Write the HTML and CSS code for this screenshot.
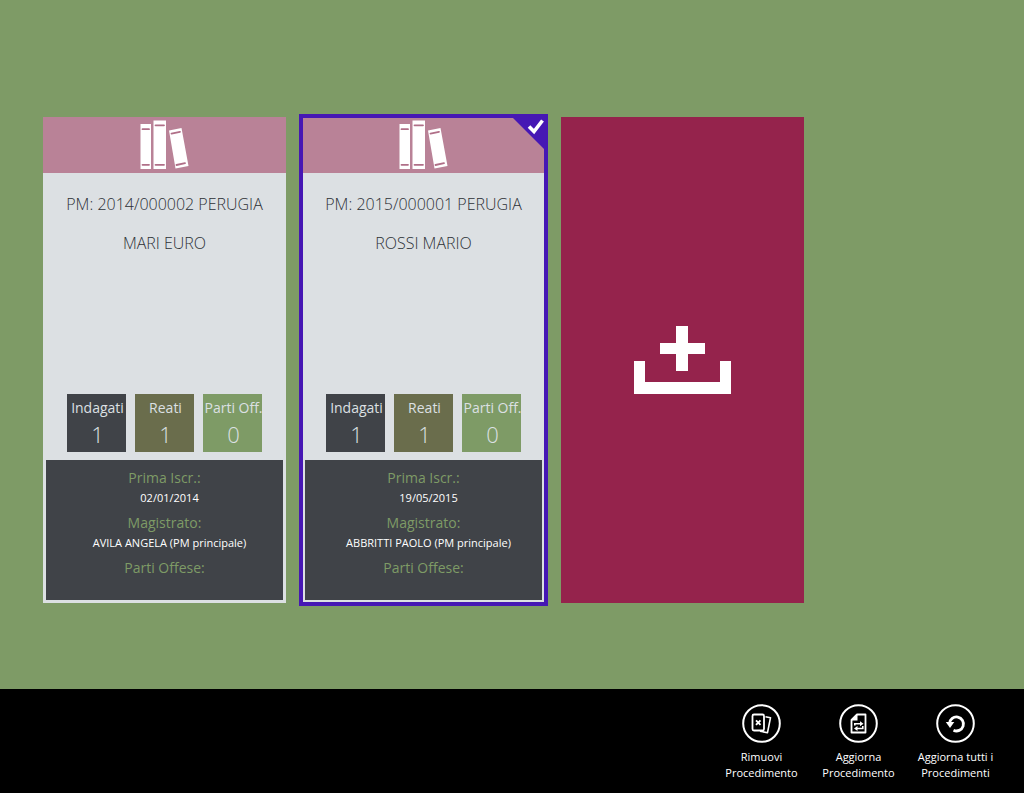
FILE: index.html
```html
<!DOCTYPE html>
<html lang="it">
<head>
<meta charset="utf-8">
<meta name="viewport" content="width=device-width, initial-scale=1">
<title>Procedimenti</title>
<link rel="stylesheet" href="styles.css">
</head>
<body>
<svg class="symbols" aria-hidden="true">
  <symbol id="books" viewBox="0 0 49 49">
    <path fill="#fff" d="M0.500 4h10.500v45H0.500zM13.500 0.500h12.500V49H13.500zM29 10.500l12.500-2.500 7 38-13 2.500z"/>
    <path fill="none" stroke="#b06f88" stroke-width="1.800" stroke-linecap="round" d="M2.500 9.200h6.500M2.500 44.800h6.500M15.500 5.300h8.500M15.500 44.800h8.500M31.500 13.600l8.500-1.800M36.500 45l8.500-1.800"/>
  </symbol>
</svg>
<main class="board">
  <article class="card">
    <header class="card-head"><svg class="books" aria-hidden="true"><use href="#books"/></svg></header>
    <div class="card-body">
      <h2 class="title">PM: 2014/000002 PERUGIA</h2>
      <p class="title">MARI EURO</p>
      <ul class="stats">
        <li class="stat stat-dark"><span class="stat-name">Indagati</span><span class="stat-value">1</span></li>
        <li class="stat stat-olive"><span class="stat-name">Reati</span><span class="stat-value">1</span></li>
        <li class="stat stat-green"><span class="stat-name">Parti Off.</span><span class="stat-value">0</span></li>
      </ul>
    </div>
    <dl class="details">
      <dt>Prima Iscr.:</dt><dd>02/01/2014</dd>
      <dt>Magistrato:</dt><dd>AVILA ANGELA (PM principale)</dd>
      <dt>Parti Offese:</dt><dd></dd>
    </dl>
  </article>
  <article class="card selected">
    <header class="card-head"><svg class="books" aria-hidden="true"><use href="#books"/></svg></header>
    <svg class="tick" viewBox="0 0 33 33" aria-hidden="true"><path fill="#4617b4" d="M0 0h33v33z"/><path fill="none" stroke="#fff" stroke-width="3.600" d="M17 9.500l5 5 8.500-11"/></svg>
    <div class="card-body">
      <h2 class="title">PM: 2015/000001 PERUGIA</h2>
      <p class="title">ROSSI MARIO</p>
      <ul class="stats">
        <li class="stat stat-dark"><span class="stat-name">Indagati</span><span class="stat-value">1</span></li>
        <li class="stat stat-olive"><span class="stat-name">Reati</span><span class="stat-value">1</span></li>
        <li class="stat stat-green"><span class="stat-name">Parti Off.</span><span class="stat-value">0</span></li>
      </ul>
    </div>
    <dl class="details">
      <dt>Prima Iscr.:</dt><dd>19/05/2015</dd>
      <dt>Magistrato:</dt><dd>ABBRITTI PAOLO (PM principale)</dd>
      <dt>Parti Offese:</dt><dd></dd>
    </dl>
  </article>
  <button class="card add" type="button" aria-label="Aggiungi">
    <svg class="add-icon" viewBox="0 0 97 68" aria-hidden="true"><path fill="#fff" d="M42 0h12v17h17v11H54v17H42V28H26V17h16zM0 35h11v21h75V35h11v33H0z"/></svg>
  </button>
</main>
<footer class="appbar">
  <button class="command" type="button">
    <svg class="command-icon" viewBox="0 0 39 39" aria-hidden="true">
      <g fill="none" stroke="#fff">
        <circle cx="19.500" cy="19.500" r="18.300" stroke-width="2"/>
        <rect x="10.500" y="10.500" width="11.500" height="16" rx="1.500" stroke-width="1.800"/>
        <path stroke-width="1.600" stroke-linejoin="round" d="M23.500 12.700l5 1-3 15-7.500-1.500"/>
        <path stroke-width="1.900" d="M14 16.300l4.500 4.500M18.500 16.300l-4.500 4.500"/>
      </g>
    </svg>
    <span>Rimuovi Procedimento</span>
  </button>
  <button class="command" type="button">
    <svg class="command-icon" viewBox="0 0 39 39" aria-hidden="true">
      <g fill="none" stroke="#fff">
        <circle cx="19.500" cy="19.500" r="18.300" stroke-width="2"/>
        <path stroke-width="1.800" stroke-linejoin="round" d="M18 10.500h8.500v18h-14V16z"/>
        <path stroke-width="1.600" d="M15.800 21.500V19.800h6M23.800 22v2.500H18"/>
      </g>
      <path fill="#fff" d="M18.500 10v6.500h-6zM21 17.300l3.500 2.500-3.500 2.500zM18.500 22v5l-3.500-2.500z"/>
    </svg>
    <span>Aggiorna Procedimento</span>
  </button>
  <button class="command" type="button">
    <svg class="command-icon" viewBox="0 0 39 39" aria-hidden="true">
      <g fill="none" stroke="#fff">
        <circle cx="19.500" cy="19.500" r="18.300" stroke-width="2"/>
        <path stroke-width="2.800" d="M13.500 19.500a7 7 0 1 1 4 6.800"/>
      </g>
      <path fill="#fff" d="M9.800 18h8.500l-4.300 6z"/>
    </svg>
    <span>Aggiorna tutti i Procedimenti</span>
  </button>
</footer>
</body>
</html>
```
FILE: styles.css
```css
* { box-sizing: border-box; }

body {
  margin: 0;
  min-height: 100vh;
  display: flex;
  flex-direction: column;
  background: #7e9b66;
  font-family: "Open Sans", "Noto Sans", sans-serif;
}

.symbols { display: none; }

.board {
  flex: 1;
  display: flex;
  flex-wrap: wrap;
  align-content: flex-start;
  gap: 16px;
  padding: 117px 43px 64px;
}

.card {
  position: relative;
  display: flex;
  flex-direction: column;
  width: 243px;
  min-height: 486px;
  background: #dce0e3;
}

.selected { outline: 4px solid #4617b4; outline-offset: -1px; }

.tick {
  position: absolute;
  top: 0;
  right: 0;
  width: 33px;
  height: 33px;
}

.card-head {
  display: flex;
  justify-content: center;
  padding: 3px 0 4px;
  background: #b98297;
}

.books { width: 49px; height: 49px; }

.card-body {
  flex: 1;
  display: flex;
  flex-direction: column;
  align-items: center;
  gap: 15px;
  padding: 19px 0 8px;
}

.title {
  margin: 0;
  font-size: 16px;
  font-weight: 300;
  line-height: 24px;
  color: #2c3036;
}

.stats {
  display: flex;
  gap: 9px;
  margin: auto 0 0;
  padding: 0;
  list-style: none;
}

.stat {
  display: flex;
  flex-direction: column;
  align-items: center;
  width: 59px;
  height: 58px;
  padding: 4px 0 0 2px;
  color: #dce0e3;
  font-weight: 300;
  white-space: nowrap;
}

.stat-dark { background: #404348; }
.stat-olive { background: #6a6d4c; }
.stat-green { background: #7e9b66; }

.stat-name { font-size: 14px; line-height: 20px; font-weight: 400; }
.stat-value { font-size: 22px; line-height: 32px; }

.details {
  min-height: 140px;
  margin: 0 3px 3px;
  padding-top: 8px;
  background: #404348;
  text-align: center;
}

.details dt {
  font-size: 14px;
  line-height: 20px;
  color: #7e9b66;
}

.details dd {
  margin: 0 0 5px;
  padding-left: 10px;
  font-size: 11px;
  line-height: 20px;
  color: #fff;
}

.add {
  align-items: center;
  justify-content: center;
  border: 0;
  padding: 0;
  background: #95234c;
}

.add-icon { width: 97px; height: 68px; }

.appbar {
  display: flex;
  justify-content: flex-end;
  min-height: 104px;
  padding: 15px 20px 12px;
  background: #000;
}

.command {
  display: flex;
  flex-direction: column;
  align-items: center;
  gap: 6px;
  width: 97px;
  padding: 0 8px;
  border: 0;
  background: none;
  color: #fff;
  font-family: inherit;
  font-size: 11px;
  line-height: 16px;
  text-align: center;
}

.command-icon { width: 39px; height: 39px; }
```
